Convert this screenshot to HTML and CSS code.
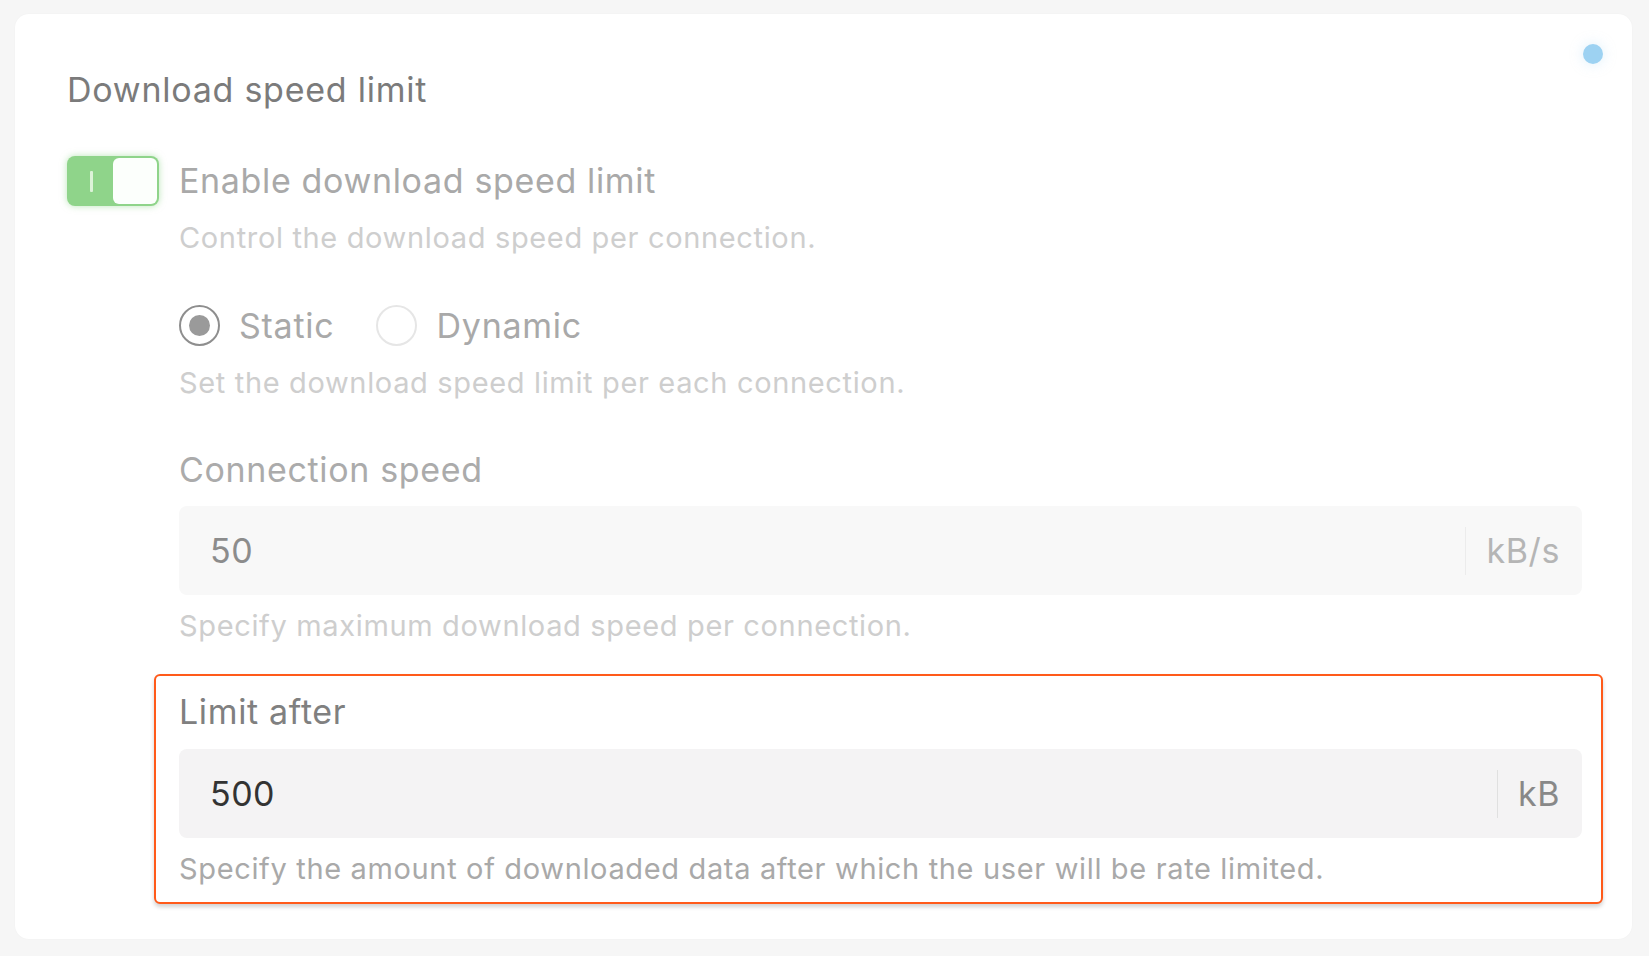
FILE: index.html
```html
<!DOCTYPE html>
<html>
<head>
<meta charset="utf-8">
<link rel="stylesheet" href="styles.css">
</head>
<body>
<div class="page">
  <div class="card">
    <span class="status-dot"></span>
    <h2 class="title">Download speed limit</h2>
    <div class="toggle-row">
      <div class="toggle"><span class="toggle-mark"></span><span class="toggle-knob"></span></div>
      <div class="toggle-text">
        <div class="toggle-label">Enable download speed limit</div>
        <div class="help help-light">Control the download speed per connection.</div>
      </div>
    </div>
    <div class="section">
      <div class="radios">
        <label class="radio"><span class="radio-circle checked"></span><span class="radio-label">Static</span></label>
        <label class="radio"><span class="radio-circle"></span><span class="radio-label">Dynamic</span></label>
      </div>
      <div class="help help-light help-radio">Set the download speed limit per each connection.</div>

      <div class="field">
        <div class="field-label field-label-dim">Connection speed</div>
        <div class="input input-dim">
          <span class="input-value value-dim">50</span>
          <span class="input-unit unit-dim">kB/s</span>
        </div>
        <div class="help help-light">Specify maximum download speed per connection.</div>
      </div>

      <div class="field highlight">
        <div class="field-label">Limit after</div>
        <div class="input input-active">
          <span class="input-value">500</span>
          <span class="input-unit">kB</span>
        </div>
        <div class="help help-mid">Specify the amount of downloaded data after which the user will be rate limited.</div>
      </div>
    </div>
  </div>
</div>
</body>
</html>
```

FILE: styles.css
```css
* { box-sizing: border-box; }
html, body { margin: 0; padding: 0; }
body {
  background: #f6f6f6;
  font-family: "Inter", "Noto Sans", sans-serif;
  width: 1649px;
  height: 956px;
  overflow: hidden;
}
.page {
  padding: 14px 17px 17px 15px;
}
.card {
  position: relative;
  background: #ffffff;
  border-radius: 14px;
  height: 925px;
  padding: 56px 50px 0 52px;
  box-shadow: 0 0 2px rgba(0,0,0,0.03);
}
.status-dot {
  position: absolute;
  top: 30px;
  right: 29px;
  width: 20px;
  height: 20px;
  border-radius: 50%;
  background: #9dd2f2;
  box-shadow: 0 0 14px rgba(157,210,242,0.35);
}
.title {
  margin: 0;
  font-size: 34px;
  letter-spacing: 0.75px;
  line-height: 40px;
  font-weight: 400;
  color: #7b7b7b;
}
.toggle-row {
  display: flex;
  gap: 20px;
  margin-top: 46px;
}
.toggle {
  position: relative;
  width: 92px;
  height: 50px;
  border-radius: 8px;
  background: #8fd48a;
  box-shadow: 0 0 7px rgba(143,212,138,0.6);
  flex: none;
  display: flex;
  align-items: center;
  justify-content: space-between;
  padding: 2px;
}
.toggle-mark {
  width: 3px;
  height: 21px;
  background: #dcf3d8;
  margin-left: 21px;
  border-radius: 1px;
}
.toggle-knob {
  width: 44px;
  height: 46px;
  background: #fcfffc;
  border-radius: 6px;
}
.toggle-text {
  display: flex;
  flex-direction: column;
}
.toggle-label {
  font-size: 34px;
  letter-spacing: 0.65px;
  line-height: 50px;
  color: #a9a9a9;
}
.help {
  font-size: 29px;
  letter-spacing: 0.65px;
  line-height: 36px;
}
.toggle-text .help { margin-top: 14px; }
.help-light { color: #cecece; }
.help-mid { color: #a9a9a9; }
.section {
  margin-left: 112px;
}
.radios {
  display: flex;
  gap: 42px;
  margin-top: 49px;
}
.radio {
  display: flex;
  align-items: center;
  gap: 19px;
}
.radio-circle {
  width: 41px;
  height: 41px;
  border-radius: 50%;
  border: 2px solid #e6e6e6;
  display: flex;
  align-items: center;
  justify-content: center;
}
.radio-circle.checked {
  border-color: #8e8e8e;
}
.radio-circle.checked::after {
  content: "";
  width: 21px;
  height: 21px;
  border-radius: 50%;
  background: #9a9a9a;
}
.radio-label {
  font-size: 34px;
  letter-spacing: 0.75px;
  line-height: 40px;
  color: #a9a9a9;
}
.help-radio { margin-top: 19px; }
.field { margin-top: 49px; }
.field-label {
  font-size: 34px;
  letter-spacing: 0.65px;
  line-height: 40px;
  color: #808080;
}
.field-label-dim { color: #ababab; }
.input {
  margin-top: 16px;
  height: 89px;
  border-radius: 8px;
  display: flex;
  align-items: center;
  padding: 0 22px 0 31px;
}
.input-dim { background: #f8f8f8; }
.input-active { background: #f4f3f4; }
.input-value {
  flex: 1;
  font-size: 34px;
  letter-spacing: 0.5px;
  color: #333333;
}
.value-dim { color: #8c8c8c; }
.input-unit {
  border-left: 1.5px solid #e0e0e0;
  height: 48px;
  display: flex;
  align-items: center;
  padding-left: 20px;
  font-size: 34px;
  letter-spacing: 0.6px;
  color: #888888;
}
.unit-dim { color: #b5b5b5; border-left-color: #ececec; }
.field .help { margin-top: 13px; }
.highlight {
  margin: 30px -21px 0 -25px;
  padding: 16px 19px 15px 23px;
  border: 2px solid #ff5a1a;
  border-radius: 6px;
  box-shadow: 0 3px 4px rgba(0,0,0,0.18);
  background: #ffffff;
}
.highlight .input { margin-top: 17px; }
.highlight .help { margin-top: 13px; }
```
